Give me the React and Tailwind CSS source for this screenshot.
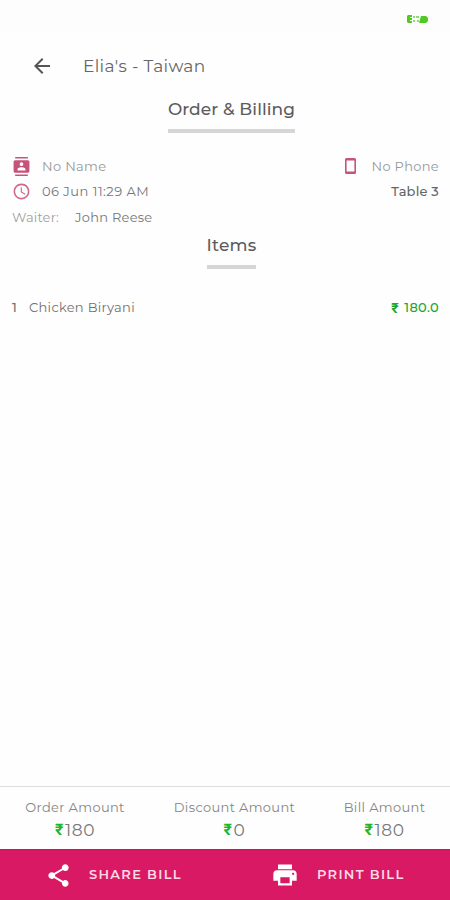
import {
  MdAccessTime,
  MdArrowBack,
  MdContacts,
  MdPrint,
  MdShare,
} from "react-icons/md";

const PhoneIcon = () => (
  <svg width="11" height="16" viewBox="0 0 11 16" className="text-[#c65379]">
    <path
      fill="currentColor"
      fillRule="evenodd"
      d="M1.5 0h8A1.5 1.5 0 0 1 11 1.5v13A1.5 1.5 0 0 1 9.5 16h-8A1.5 1.5 0 0 1 0 14.500v-13A1.5 1.5 0 0 1 1.500 0zM1.600 2.500v11h7.800v-11z"
    />
  </svg>
);

const SectionTitle = ({ children }) => (
  <h2 className="border-b-4 border-[#d6d6d6] text-[17px] leading-6 font-medium text-[#5c5c5c] whitespace-nowrap">
    {children}
  </h2>
);

const Total = ({ label, value, className }) => (
  <div className={`flex flex-col items-center ${className}`}>
    <span className="text-[13px] leading-5 tracking-[0.35px] text-[#858585] whitespace-nowrap">{label}</span>
    <span className="flex text-[17px] leading-[26px] tracking-[0.6px] text-[#777777]">
      <span className="w-[10px] font-['Roboto'] text-[16px] font-bold text-[#20b52b]">₹</span>
      {value}
    </span>
  </div>
);

const App = () => {
  return (
    <div className="flex h-[900px] w-full flex-col overflow-hidden bg-[#fefefe] font-['Montserrat','Inter',sans-serif]">

      {/* Status Bar */}
      <div className="flex h-8 shrink-0 justify-end bg-[#fdfdfd] pt-[15px] pr-[22px]">
        <svg width="21" height="8" viewBox="0 0 21 8">
          <path d="M1 0h4v2H3v1h2v2H3v1h2v2H1L0 7V1zM12 8l2-7h5l2 2v3l-2 2z" fill="#4fca20" />
          <path d="M6 1h2v2H6zm0 4h2v2H6zM9 1h3v2H9zm1 4h2v2h-2z" fill="#8bdd6c" />
        </svg>
      </div>

      {/* Header */}
      <header className="flex h-[68px] shrink-0 items-center pl-[30px]">
        <MdArrowBack size={24} className="text-[#555555]" />
        <h1 className="ml-[29px] text-[17px] leading-6 tracking-[0.32px] text-[#666666]">Elia's - Taiwan</h1>
      </header>

      <div className="flex h-[53px] shrink-0 justify-center pl-[13px]">
        <div className="-mt-[3px]">
          <SectionTitle>
            <span className="block h-[32px] tracking-[0.08px]">Order &amp; Billing</span>
          </SectionTitle>
        </div>
      </div>

      {/* Customer Details */}
      <div className="h-[77px] shrink-0 pr-[11px] pl-3 text-[13px] leading-[25px] text-[#777777]">
        <div className="flex h-[25px] items-center justify-between pt-[1px]">
          <div className="flex items-center">
            <MdContacts size={19} className="text-[#c65379]" />
            <span className="ml-[11px] tracking-[0.35px] text-[#989898]">No Name</span>
          </div>
          <div className="flex items-center">
            <PhoneIcon />
            <span className="ml-4 tracking-[0.3px] text-[#989898]">No Phone</span>
          </div>
        </div>
        <div className="flex h-[25px] items-center justify-between pt-[1px]">
          <div className="flex items-center">
            <MdAccessTime size={19} className="text-[#d1688a]" />
            <span className="ml-[11px] tracking-[0.48px]">06 Jun 11:29 AM</span>
          </div>
          <span className="font-medium tracking-[0.2px] text-[#666666]">Table 3</span>
        </div>
        <div className="flex h-[25px] items-center pt-[3px]">
          <span className="w-[63px] tracking-[0.2px] text-[#a0a0a0]">Waiter:</span>
          <span className="tracking-[0.25px]">John Reese</span>
        </div>
      </div>

      <div className="flex h-[66px] shrink-0 justify-center pt-[3px] pl-[13px]">
        <div>
          <SectionTitle>
            <span className="block h-[32px] tracking-[0.2px]">Items</span>
          </SectionTitle>
        </div>
      </div>

      {/* Ordered Items */}
      <div className="flex h-6 shrink-0 items-center justify-between pr-[11px] pl-3 text-[13px] text-[#707070]">
        <div className="flex">
          <span className="w-[17px] font-medium">1</span>
          <span className="tracking-[0.3px]">Chicken Biryani</span>
        </div>
        <span className="flex items-center font-medium tracking-[0.3px] text-[#22a52d]">
          <span className="w-[13px] font-['Roboto'] text-[14px] font-bold">₹</span>
          180.0
        </span>
      </div>

      <div className="flex-1" />

      {/* Totals */}
      <div className="flex h-[63px] shrink-0 justify-between border-t border-[#dddddd] px-[25px] pt-[10px]">
        <Total label="Order Amount" value="180" className="w-[100px]" />
        <Total label="Discount Amount" value="0" className="w-[121px]" />
        <Total label="Bill Amount" value="180" className="w-[81px]" />
      </div>

      {/* Actions */}
      <div className="flex h-[51px] shrink-0 border-t border-[#cf1456] bg-[#d91963] text-[13px] font-semibold text-[#ffd9e7]">
        <button className="flex flex-1 items-center pl-[45px]">
          <MdShare size={27} className="text-white" />
          <span className="ml-[17px] tracking-[1.3px]">SHARE BILL</span>
        </button>
        <button className="flex flex-1 items-center pl-[47px]">
          <MdPrint size={28} className="text-white" />
          <span className="ml-[18px] tracking-[1.3px]">PRINT BILL</span>
        </button>
      </div>
    </div>
  );
};

export default App;
